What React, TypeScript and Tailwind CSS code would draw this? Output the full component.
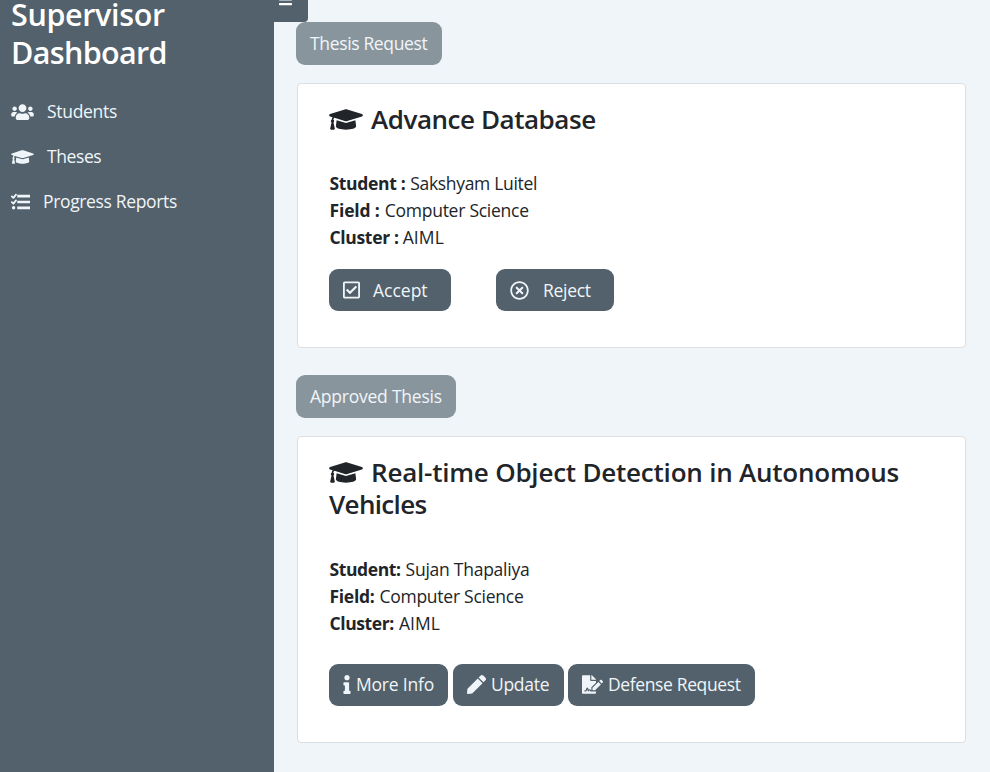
import type { ReactNode } from "react";
import { FaBars, FaFileSignature, FaGraduationCap, FaInfo, FaPen, FaRegCheckSquare, FaRegTimesCircle, FaUsers } from "react-icons/fa";

function ChecklistIcon({ className }: { className: string }) {
  return (
    <svg viewBox="0 0 19 18" fill="none" stroke="currentColor" className={className}>
      <path d="M0.8 3.4 2.4 4.9 5 1.6M0.8 9.2 2.4 10.7 5 7.4" strokeWidth="1.8" strokeLinecap="round" strokeLinejoin="round" />
      <path d="M7.6 3.2h10.2M7.6 9h10.2M7.6 14.8h10.2" strokeWidth="2.7" strokeLinecap="square" strokeLinejoin="round" />
      <circle cx="2.6" cy="14.8" r="1.7" fill="currentColor" stroke="none" />
    </svg>
  );
}

function Badge({ className, children }: { className: string; children: ReactNode }) {
  return (
    <div className={`flex h-[43px] items-center rounded-[9px] bg-[#89959d] pl-3.5 text-[#f0f5f9] ${className}`}>
      {children}
    </div>
  );
}

function Button({ className, children }: { className: string; children: ReactNode }) {
  return (
    <button className={`flex h-[42px] items-center rounded-[9px] bg-[#52616b] pl-3.5 text-[#f0f5f9] ${className}`}>
      {children}
    </button>
  );
}

function Field({ label, labelClass, value, valueClass }: { label: string; labelClass: string; value: string; valueClass: string }) {
  return (
    <p className="flex h-[27px] items-center">
      <b className={labelClass}>{label}</b>
      <span className={valueClass}>{value}</span>
    </p>
  );
}

export default function App() {
  return (
    <div className="flex h-[772px] w-[990px] overflow-hidden bg-[#f0f5f9] font-['Open_Sans','Noto_Sans',sans-serif] text-[17.5px] leading-[27px] whitespace-nowrap text-[#212529]">
      <aside className="flex w-[274px] shrink-0 flex-col bg-[#52616b] pl-[11px] text-[#f0f5f9]">
        <h1 className="-mt-[5px] text-[30.5px] leading-[38px] font-semibold text-white">
          <span className="block"><span className="tracking-[-0.35px]">Supervisor</span></span>
          <span className="block"><span className="tracking-[-0.65px]">Dashboard</span></span>
        </h1>
        <nav className="mt-[18px] flex flex-col">
          <a className="flex h-[45px] items-center"><FaUsers className="mr-[13px] h-[18px] w-[23px]" /><span className="tracking-[-0.3px]">Students</span></a>
          <a className="flex h-[45px] items-center"><FaGraduationCap className="mr-[13px] h-[18px] w-[23px]" /><span className="tracking-[-0.4px]">Theses</span></a>
          <a className="flex h-[45px] items-center"><ChecklistIcon className="mr-[13px] h-[18px] w-[19px]" /><span className="tracking-[-0.35px]">Progress Reports</span></a>
        </nav>
      </aside>
      <main className="flex flex-1 flex-col">
        <div className="flex h-[22px] w-[34px] items-start rounded-br-[4px] bg-[#52616b] pl-[5px] text-white">
          <FaBars className="-mt-[8px] h-[15px] w-[13px]" />
        </div>
        <section className="ml-[22px] flex flex-col">
          <Badge className="w-[146px]"><span className="tracking-[-0.35px]">Thesis Request</span></Badge>
          <article className="mt-[18px] ml-px flex h-[265px] w-[669px] flex-col rounded-[4px] border border-[#dcdfe1] bg-white pl-[31px]">
            <h2 className="mt-[19px] flex h-8 items-center text-[26px] font-semibold">
              <FaGraduationCap className="mr-[8px] h-[27px] w-[34px]" /><span className="tracking-[-0.45px]">Advance Database</span>
            </h2>
            <div className="mt-[35px] pl-[0.5px]">
              <Field label="Student :" labelClass="mr-[5px] tracking-[-0.33px]" value="Sakshyam Luitel" valueClass="tracking-[-0.33px]" />
              <Field label="Field :" labelClass="mr-[5px] tracking-[-0.15px]" value="Computer Science" valueClass="tracking-[-0.25px]" />
              <Field label="Cluster :" labelClass="mr-[4px] tracking-[-0.33px]" value="AIML" valueClass="tracking-[0.1px]" />
            </div>
            <div className="mt-[18px] flex gap-[45px]">
              <Button className="w-[122px]"><FaRegCheckSquare className="mr-[13px] h-[20px] w-[17px]" /><span className="tracking-[0px]">Accept</span></Button>
              <Button className="w-[118px]"><FaRegTimesCircle className="mr-[14px] size-[19px]" /><span className="tracking-[-0.3px]">Reject</span></Button>
            </div>
          </article>
          <Badge className="mt-[27px] w-[160px]"><span className="tracking-[-0.23px]">Approved Thesis</span></Badge>
          <article className="mt-[18px] ml-px flex h-[307px] w-[669px] flex-col rounded-[4px] border border-[#dcdfe1] bg-white pl-[31px]">
            <h2 className="mt-[19px] text-[26px] leading-8 font-semibold">
              <span className="flex h-8 items-center">
                <FaGraduationCap className="mr-[8px] h-[27px] w-[34px]" /><span className="tracking-[-0.22px]">Real-time Object Detection in Autonomous</span>
              </span>
              <span className="block"><span className="tracking-[-0.65px]">Vehicles</span></span>
            </h2>
            <div className="mt-[36px] pl-[0.5px]">
              <Field label="Student:" labelClass="mr-[5px] tracking-[-0.4px]" value="Sujan Thapaliya" valueClass="tracking-[-0.25px]" />
              <Field label="Field:" labelClass="mr-[5px] tracking-[-0.3px]" value="Computer Science" valueClass="tracking-[-0.25px]" />
              <Field label="Cluster:" labelClass="mr-[5px] tracking-[-0.4px]" value="AIML" valueClass="tracking-[0.1px]" />
            </div>
            <div className="mt-[27px] flex">
              <Button className="mr-[5px] w-[119px] pb-px"><FaInfo className="mr-[5px] h-[19px] w-[8px]" /><span className="tracking-[-0.2px]">More Info</span></Button>
              <Button className="mr-[4px] w-[111px] pb-px"><FaPen className="mr-[5px] size-[19px]" /><span className="tracking-[-0.3px]">Update</span></Button>
              <Button className="w-[187px] pb-px"><FaFileSignature className="mr-[5px] h-[19px] w-[21px]" /><span className="tracking-[-0.37px]">Defense Request</span></Button>
            </div>
          </article>
        </section>
      </main>
    </div>
  );
}
